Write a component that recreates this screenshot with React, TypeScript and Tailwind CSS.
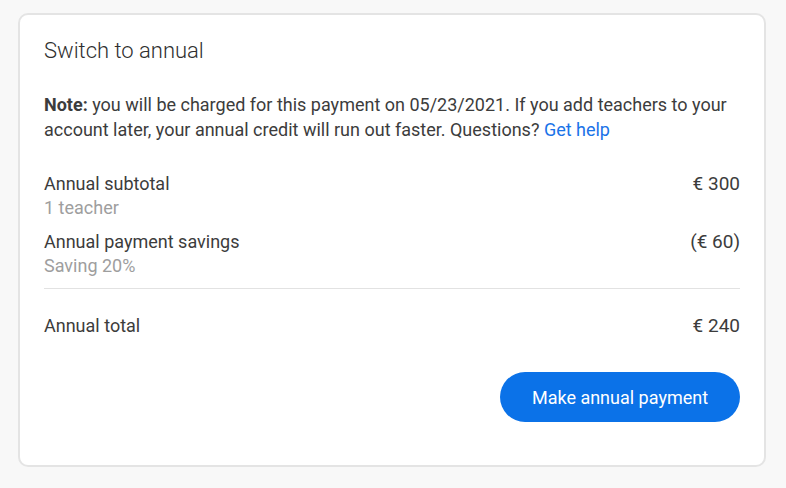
export default function App() {
  return (
    <div className="min-h-screen bg-[#f8f8f8] pt-[13px] pl-[18px]" style={{ fontFamily: 'Roboto, "Noto Sans", sans-serif' }}>
      <div className="w-[748px] h-[454px] bg-white border-2 border-[#e4e4e4] rounded-[10px] px-[24px] pt-[22px] text-[#3c3c3c]">
        <h2 className="text-[22px] leading-[28px] font-light text-[#2f2f2f]">Switch to annual</h2>

        <p className="mt-[27px] text-[18px] leading-[25px]">
          <span className="font-bold">Note:</span> you will be charged for this payment on 05/23/2021. If you add
          teachers to your account later, your annual credit will run out faster. Questions?{' '}
          <a className="text-[#1a73e8]">Get help</a>
        </p>

        <div className="mt-[30px] flex justify-between text-[18px] leading-[24px]">
          <div>
            <div>Annual subtotal</div>
            <div className="text-[#9e9e9e]">1 teacher</div>
          </div>
          <div className="text-[19px]">€ 300</div>
        </div>

        <div className="mt-[10px] flex justify-between text-[18px] leading-[24px]">
          <div>
            <div>Annual payment savings</div>
            <div className="text-[#9e9e9e]">Saving 20%</div>
          </div>
          <div className="text-[19px]">(€ 60)</div>
        </div>

        <div className="mt-[10px] border-t border-[#e2e2e2]" />

        <div className="mt-[25px] flex justify-between text-[18px] leading-[24px]">
          <div>Annual total</div>
          <div className="text-[19px]">€ 240</div>
        </div>

        <div className="mt-[34px] flex justify-end">
          <button className="w-[240px] h-[50px] rounded-full bg-[#0b72e8] text-white text-[18px]">
            Make annual payment
          </button>
        </div>
      </div>
    </div>
  );
}
